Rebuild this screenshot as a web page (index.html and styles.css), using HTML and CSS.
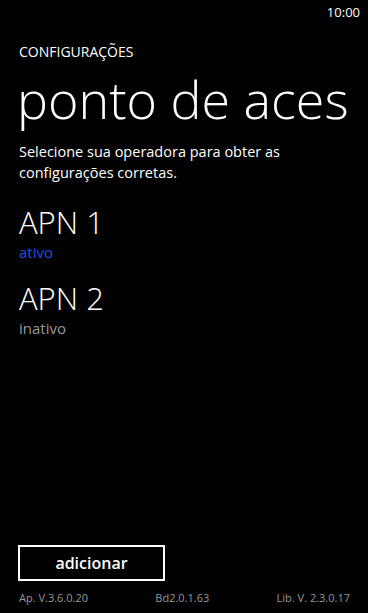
FILE: index.html
```html
<!DOCTYPE html>
<html lang="pt">
<head>
  <meta charset="UTF-8">
  <meta name="viewport" content="width=device-width, initial-scale=1.0">
  <title>ponto de acesso</title>
  <link rel="stylesheet" href="styles.css">
</head>
<body>
  <div class="status">10:00</div>

  <div class="page">
    <div class="app-title">CONFIGURAÇÕES</div>
    <h1 class="page-title">ponto de aces</h1>

    <p class="intro">Selecione sua operadora para obter as configurações corretas.</p>

    <ul class="apn-list">
      <li class="apn">
        <div class="apn-name">APN 1</div>
        <div class="apn-state on">ativo</div>
      </li>
      <li class="apn">
        <div class="apn-name">APN 2</div>
        <div class="apn-state">inativo</div>
      </li>
    </ul>
  </div>

  <div class="bottom">
    <button class="add-btn">adicionar</button>
    <div class="versions">
      <span>Ap. V.3.6.0.20</span>
      <span>Bd2.0.1.63</span>
      <span>Lib. V. 2.3.0.17</span>
    </div>
  </div>
</body>
</html>
```

FILE: styles.css
```css
html, body { margin: 0; height: 100%; }
body {
  background: #000;
  color: #fff;
  font-family: "Open Sans", "Noto Sans", sans-serif;
  display: flex;
  flex-direction: column;
  overflow: hidden;
}
.status { text-align: right; font-size: 13px; padding: 3px 8px 0 0; height: 20px; }
.page { flex: 1; padding: 0 19px; }
.app-title { font-size: 14px; line-height: 19px; margin-top: 19px; }
.page-title {
  font-size: 52px;
  font-weight: 300;
  margin: 8px 0 0 -2px;
  line-height: 60px;
  white-space: nowrap;
}
.intro { font-size: 14.5px; line-height: 21px; margin: 12px 0 0; }
.apn-list { list-style: none; margin: 19px 0 0; padding: 0; }
.apn { margin-bottom: 16px; }
.apn-name { font-size: 31px; font-weight: 300; line-height: 40px; }
.apn-state { font-size: 15px; line-height: 20px; color: #999; }
.apn-state.on { color: #1b50e0; }
.bottom { padding: 0 18px 8px 19px; }
.add-btn {
  display: block;
  width: 147px;
  height: 36px;
  margin-left: -1px;
  background: #000;
  color: #fff;
  border: 2px solid #fff;
  font-family: inherit;
  font-size: 16px;
  font-weight: 600;
  padding: 0;
}
.versions {
  display: flex;
  justify-content: space-between;
  font-size: 11px;
  color: #999;
  margin-top: 9px;
}
```
